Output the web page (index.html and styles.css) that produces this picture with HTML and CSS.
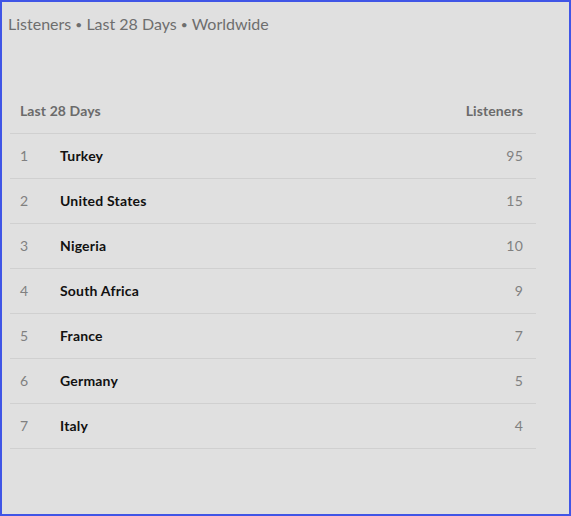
FILE: index.html
```html
<!DOCTYPE html>
<html>
<head>
<meta charset="utf-8">
<link rel="stylesheet" href="styles.css">
</head>
<body>
<div class="frame">
  <div class="subtitle">Listeners <span class="sep">•</span> Last 28 Days <span class="sep">•</span> Worldwide</div>
  <div class="table">
    <div class="row head">
      <span class="rank">Last 28 Days</span>
      <span class="val">Listeners</span>
    </div>
    <div class="row"><span class="rank">1</span><span class="name">Turkey</span><span class="val">95</span></div>
    <div class="row"><span class="rank">2</span><span class="name">United States</span><span class="val">15</span></div>
    <div class="row"><span class="rank">3</span><span class="name">Nigeria</span><span class="val">10</span></div>
    <div class="row"><span class="rank">4</span><span class="name">South Africa</span><span class="val">9</span></div>
    <div class="row"><span class="rank">5</span><span class="name">France</span><span class="val">7</span></div>
    <div class="row"><span class="rank">6</span><span class="name">Germany</span><span class="val">5</span></div>
    <div class="row"><span class="rank">7</span><span class="name">Italy</span><span class="val">4</span></div>
  </div>
</div>
</body>
</html>
```
FILE: styles.css
```css
html, body { margin: 0; padding: 0; }
body { background: #e0e0e0; font-family: "Lato", "Noto Sans", sans-serif; }
.frame {
  box-sizing: border-box;
  width: 571px;
  height: 516px;
  border: 2px solid #4055e6;
  background: #e0e0e0;
  padding: 12px 0 0 6px;
}
.subtitle {
  font-size: 16px;
  line-height: 20px;
  height: 20px;
  color: #6e6e6e;
}
.sep { font-size: 12px; line-height: 0; vertical-align: 1px; }
.table {
  margin: 55px 0 0 2px;
  width: 526px;
}
.row {
  display: flex;
  align-items: center;
  height: 44px;
  border-bottom: 1px solid #d0d0d0;
  padding: 0 13px 1px 10px;
  box-sizing: content-box;
  font-size: 14px;
  letter-spacing: 0.2px;
}
.row { height: 43px; }
.row.head { font-weight: 700; color: #6b6b6b; letter-spacing: 0.1px; }
.rank { width: 40px; color: #808080; }
.row.head .rank { width: auto; color: #6b6b6b; font-weight: 700; }
.name { font-weight: 700; color: #111; }
.val { margin-left: auto; color: #808080; }
.row.head .val { color: #6b6b6b; font-weight: 700; }
```
